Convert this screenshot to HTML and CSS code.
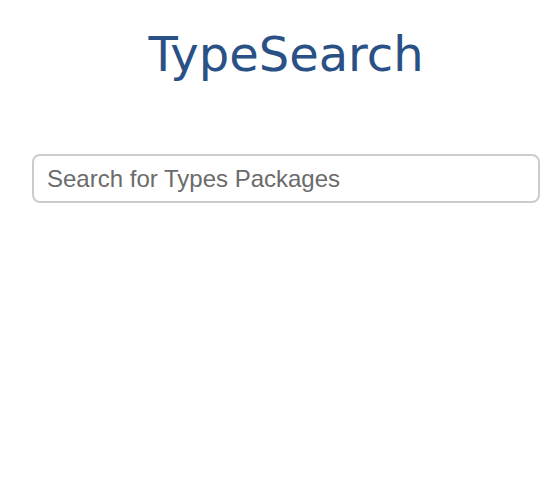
FILE: index.html
```html
<!DOCTYPE html>
<html>
<head>
<meta charset="utf-8">
<link rel="stylesheet" href="styles.css">
</head>
<body>
<main class="page">
  <h1 class="title">TypeSearch</h1>
  <input class="search" type="text" placeholder="Search for Types Packages">
</main>
</body>
</html>
```
FILE: styles.css
```css
html, body {
  margin: 0;
  padding: 0;
  background: #fff;
}
.page {
  display: flex;
  flex-direction: column;
  align-items: stretch;
  margin-left: 32px;
  width: 508px;
}
.title {
  margin: 26px 0 0 0;
  text-align: center;
  font-family: "DejaVu Sans", Verdana, sans-serif;
  font-weight: normal;
  font-size: 48px;
  line-height: 56px;
  color: #2a5185;
}
.search {
  margin-top: 72px;
  box-sizing: border-box;
  height: 49px;
  width: 508px;
  border: 2px solid #cccccc;
  border-radius: 8px;
  padding: 0 13px;
  font-family: "Liberation Sans", Arial, sans-serif;
  font-size: 24px;
  color: #333;
  outline: none;
}
.search::placeholder {
  color: #6b6b6b;
}
```
